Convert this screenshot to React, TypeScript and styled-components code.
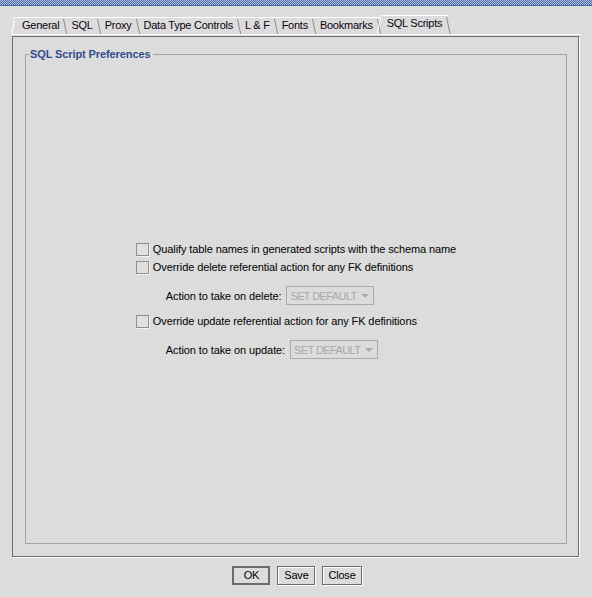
import React from "react";
import styled, { createGlobalStyle } from "styled-components";

const Global = createGlobalStyle`
  *, *::before, *::after { box-sizing: border-box; }
  html, body { margin: 0; padding: 0; background: #dcdcdc; }
  body { font-family: "Liberation Sans", Arial, sans-serif; font-size: 11px; color: #000; letter-spacing: -0.1px; }
  #root { width: 592px; height: 597px; }
`;

const Window = styled.div`
  width: 592px;
  height: 597px;
  display: flex;
  flex-direction: column;
  background: #dcdcdc;
  overflow: hidden;
`;

const TitleStrip = styled.div`
  height: 6px;
  flex: none;
  background-color: #4d6cab;
  background-image: repeating-conic-gradient(#4d6cab 0 25%, #b4c2e0 0 50%);
  background-size: 2px 2px;
  border-bottom: 1px solid #4d6cab;
`;

const Body = styled.div`
  flex: 1;
  display: flex;
  flex-direction: column;
  padding: 9px 11px 0 12px;
`;

const TabBar = styled.div`
  display: flex;
  align-items: flex-end;
  height: 19px;
`;

const Tab = styled.div<{ $active?: boolean; $first?: boolean }>`
  position: relative;
  height: ${(p) => (p.$active ? 19 : 17)}px;
  line-height: ${(p) => (p.$active ? 15 : 14)}px;
  padding: 0 6px 0 ${(p) => (p.$first ? 10 : p.$active ? 8 : 6)}px;
  border-top: 1px solid #fff;
  border-top-left-radius: ${(p) => (p.$first || p.$active ? 4 : 0)}px;
  color: #0c0010;
  white-space: nowrap;
  letter-spacing: -0.25px;
  &::before {
    content: "";
    display: ${(p) => (p.$first || p.$active ? "block" : "none")};
    position: absolute;
    left: ${(p) => (p.$first ? 2 : 1)}px;
    top: 2px;
    bottom: 0;
    border-left: 1px solid #fff;
    transform: skewX(-12deg);
    transform-origin: top;
  }
  &::after {
    content: "";
    position: absolute;
    right: 1px;
    top: 1px;
    bottom: 0;
    border-right: 1px solid #8c8c8c;
    transform: skewX(12deg);
    transform-origin: top;
  }
`;

const PaneEdge = styled.div`
  flex: none;
  border-top: 1px solid #fff;
  padding: 1px 2px 0 0;
`;

const Pane = styled.div`
  height: 521px;
  border: 1px solid #6b6b6b;
  box-shadow: 1px 1px 0 #fff;
  padding: 17px 11px 12px 12px;
  display: flex;
  flex-direction: column;
`;

const Group = styled.section`
  position: relative;
  flex: 1;
  border: 1px solid #a3a3a3;
  display: flex;
  align-items: center;
  justify-content: center;
`;

const GroupTitle = styled.h2`
  position: absolute;
  top: -8px;
  left: 3px;
  margin: 0;
  padding: 0 2px 0 1px;
  background: #dcdcdc;
  font-size: 11px;
  line-height: 14px;
  font-weight: bold;
  color: #324d8c;
`;

const Options = styled.div`
  display: flex;
  flex-direction: column;
  margin-top: 8px;
`;

const CheckRow = styled.label`
  display: flex;
  align-items: center;
  gap: 4px;
  height: 18px;
  white-space: nowrap;
`;

const Box = styled.span`
  width: 13px;
  height: 13px;
  border: 1px solid #8e8e8e;
  background: #e0e0e0;
  box-shadow: 1px 1px 0 #f2f2f2;
  flex: none;
`;

const ActionRow = styled.div`
  display: flex;
  align-items: center;
  gap: 5px;
  height: 19px;
  padding-left: 30px;
  margin: 10px 0 7px;
  white-space: nowrap;
`;

const Combo = styled.div`
  width: 88px;
  height: 19px;
  border: 1px solid #ababab;
  display: flex;
  align-items: center;
  justify-content: space-between;
  padding: 0 4px 0 3px;
  color: #a8a8a8;
  letter-spacing: -0.6px;
`;

const Arrow = styled.span`
  flex: none;
  width: 0;
  height: 0;
  border-left: 4px solid transparent;
  border-right: 4px solid transparent;
  border-top: 4px solid #acacac;
`;

const ButtonBar = styled.div`
  display: flex;
  justify-content: center;
  gap: 7px;
  padding: 9px 0 0 1px;
`;

const Button = styled.button<{ $default?: boolean }>`
  font-family: "Liberation Sans", Arial, sans-serif;
  font-size: 11px;
  letter-spacing: -0.2px;
  color: #000;
  height: 19px;
  min-width: 38px;
  padding: 0 5px;
  background: #dcdcdc;
  border: ${(p) => (p.$default ? "2px solid #6b6b6b" : "1px solid #6b6b6b")};
  box-shadow: ${(p) => (p.$default ? "none" : "1px 1px 0 #fff, inset 1px 1px 0 #fff")};
  border-radius: 0;
  line-height: 15px;
`;

const tabs = ["General", "SQL", "Proxy", "Data Type Controls", "L & F", "Fonts", "Bookmarks", "SQL Scripts"];

export default function App() {
  return (
    <Window>
      <Global />
      <TitleStrip />
      <Body>
        <TabBar>
          {tabs.map((t, i) => (
            <Tab key={t} $first={i === 0} $active={i === tabs.length - 1}>
              {t}
            </Tab>
          ))}
        </TabBar>
        <PaneEdge>
          <Pane>
            <Group>
              <GroupTitle>SQL Script Preferences</GroupTitle>
              <Options>
                <CheckRow>
                  <Box />
                  Qualify table names in generated scripts with the schema name
                </CheckRow>
                <CheckRow>
                  <Box />
                  Override delete referential action for any FK definitions
                </CheckRow>
                <ActionRow>
                  Action to take on delete:
                  <Combo>
                    SET DEFAULT
                    <Arrow />
                  </Combo>
                </ActionRow>
                <CheckRow>
                  <Box />
                  Override update referential action for any FK definitions
                </CheckRow>
                <ActionRow>
                  Action to take on update:
                  <Combo>
                    SET DEFAULT
                    <Arrow />
                  </Combo>
                </ActionRow>
              </Options>
            </Group>
          </Pane>
        </PaneEdge>
        <ButtonBar>
          <Button $default>OK</Button>
          <Button>Save</Button>
          <Button>Close</Button>
        </ButtonBar>
      </Body>
    </Window>
  );
}
